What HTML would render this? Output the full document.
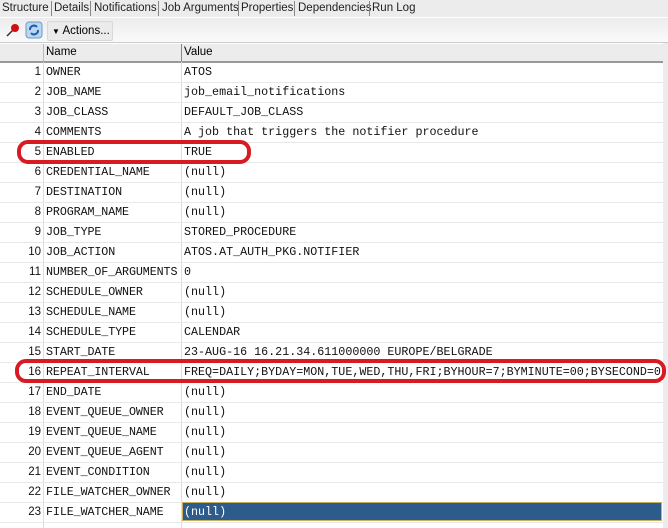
<!DOCTYPE html>
<html><head><style>
html,body{margin:0;width:668px;height:528px;overflow:hidden}
body{background:#ececec;position:relative;font-family:"Liberation Sans",Arial,sans-serif;}
.tabs{position:absolute;top:0;left:0;height:17px;width:668px;background:#ececec;border-bottom:1px solid #fff;font-size:11.5px;color:#222;white-space:nowrap}
.tabs span{position:absolute;top:2px}
.sep{position:absolute;top:1px;width:1px;height:15px;background:#888}
.tb{position:absolute;top:18px;left:0;width:668px;height:24px;background:linear-gradient(#ececec,#fafafa);border-bottom:1px solid #ccc}
.act{position:absolute;left:47px;top:3px;width:64px;height:18px;border:1px solid #d8d8d8;border-radius:2px;background:#ebebeb;font-size:11.5px;line-height:18px;white-space:nowrap}
.grid{position:absolute;left:0;top:43px;width:663px;height:485px;background:#fff;overflow:hidden}
.hdr{position:absolute;left:0;top:1px;width:663px;height:17px;background:#ececec;border-bottom:2px solid #999;font-size:11.5px}
.hdr span{position:absolute;top:2px}
.row{position:absolute;left:0;width:663px;height:20px;border-bottom:1px solid #e8e8e8;font-family:"Liberation Mono",monospace;font-size:11.7px;line-height:20px;color:#111;white-space:nowrap}
.n{position:absolute;right:622px;font-family:"Liberation Sans",sans-serif;font-size:11.5px}
.k{position:absolute;left:46px;letter-spacing:-0.1px}
.v{position:absolute;left:184px}
.vl{position:absolute;left:181px;top:0;width:1px;height:485px;background:#ddd}
.vl2{position:absolute;left:43px;top:0;width:1px;height:485px;background:#ddd}
.oval{position:absolute;border:4px solid #d81a24;border-radius:11px}
</style></head><body>
<div class="tabs">
<span style="left:2px">Structure</span><div class="sep" style="left:51px"></div>
<span style="left:54px">Details</span><div class="sep" style="left:90px"></div>
<span style="left:94px">Notifications</span><div class="sep" style="left:158px"></div>
<span style="left:162px">Job Arguments</span><div class="sep" style="left:238px"></div>
<span style="left:241px">Properties</span><div class="sep" style="left:294px"></div>
<span style="left:298px">Dependencies</span><div class="sep" style="left:369px"></div>
<span style="left:372px">Run Log</span>
</div>
<div class="tb">
<svg style="position:absolute;left:5px;top:5px" width="16" height="14"><line x1="2" y1="13" x2="8" y2="7" stroke="#333" stroke-width="1.5"/><circle cx="10" cy="5" r="4" fill="#d01010"/></svg>
<svg style="position:absolute;left:25px;top:3px" width="18" height="18"><rect x="1" y="1" width="16" height="16" rx="3" fill="#bcd6f0" stroke="#6a9ad0"/><path d="M5 9a4 4 0 0 1 7-3M13 9a4 4 0 0 1-7 3" stroke="#1a5fb0" stroke-width="2" fill="none"/></svg>
<div class="act"><span style="font-size:8px;margin-left:4px">&#9660;</span> Actions...</div>
</div>
<div class="grid">
<div class="hdr"><span style="left:46px">Name</span><span style="left:184px">Value</span><div style="position:absolute;left:181px;top:0;width:1px;height:17px;background:#888"></div><div style="position:absolute;left:43px;top:0;width:1px;height:17px;background:#bbb"></div></div>
<div class="vl2" style="top:19px"></div><div class="vl" style="top:19px"></div>
<div id="rows"></div>
</div>
<div class="oval" style="left:17px;top:140px;width:226px;height:16px"></div>
<div class="oval" style="left:15px;top:359px;width:643px;height:16px"></div>
<script>
var d=[["OWNER","ATOS"],["JOB_NAME","job_email_notifications"],["JOB_CLASS","DEFAULT_JOB_CLASS"],["COMMENTS","A job that triggers the notifier procedure"],["ENABLED","TRUE"],["CREDENTIAL_NAME","(null)"],["DESTINATION","(null)"],["PROGRAM_NAME","(null)"],["JOB_TYPE","STORED_PROCEDURE"],["JOB_ACTION","ATOS.AT_AUTH_PKG.NOTIFIER"],["NUMBER_OF_ARGUMENTS","0"],["SCHEDULE_OWNER","(null)"],["SCHEDULE_NAME","(null)"],["SCHEDULE_TYPE","CALENDAR"],["START_DATE","23-AUG-16 16.21.34.611000000 EUROPE/BELGRADE"],["REPEAT_INTERVAL","FREQ=DAILY;BYDAY=MON,TUE,WED,THU,FRI;BYHOUR=7;BYMINUTE=00;BYSECOND=0"],["END_DATE","(null)"],["EVENT_QUEUE_OWNER","(null)"],["EVENT_QUEUE_NAME","(null)"],["EVENT_QUEUE_AGENT","(null)"],["EVENT_CONDITION","(null)"],["FILE_WATCHER_OWNER","(null)"],["FILE_WATCHER_NAME","(null)"]];
var h="";d.forEach(function(r,i){var t=19+i*20;var sel=i==22?'<div style="position:absolute;left:182px;top:0;width:480px;height:19px;background:#2d5b8c;border:1px solid #c8b060;box-sizing:border-box"></div>':'';h+='<div class="row" style="top:'+t+'px">'+sel+'<span class="n">'+(i+1)+'</span><span class="k">'+r[0]+'</span><span class="v"'+(i==22?' style="color:#fff"':'')+'>'+r[1]+'</span></div>';});
document.getElementById("rows").innerHTML=h;
</script>
</body></html>
